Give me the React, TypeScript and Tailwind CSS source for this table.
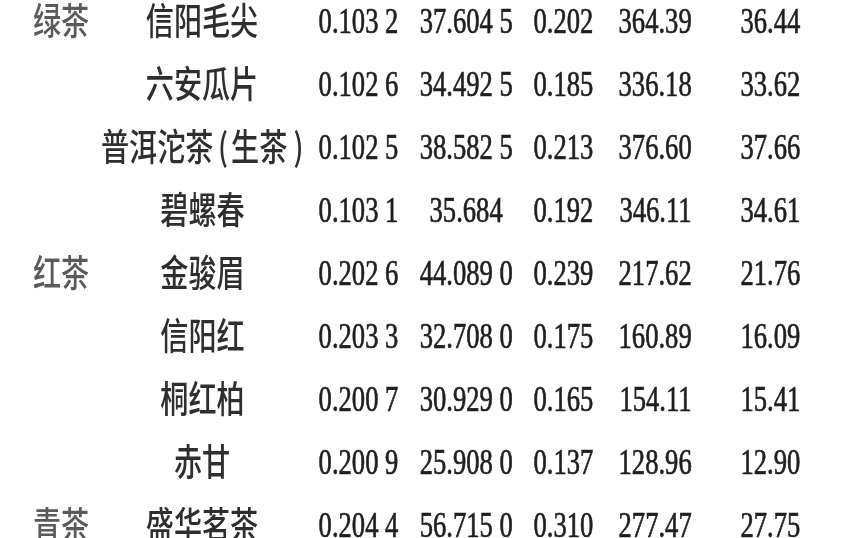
import React from "react";

type Row = { cat?: string; name: string; v: string[] };

const rows: Row[] = [
  { cat: "绿茶", name: "信阳毛尖", v: ["0.103 2", "37.604 5", "0.202", "364.39", "36.44"] },
  { name: "六安瓜片", v: ["0.102 6", "34.492 5", "0.185", "336.18", "33.62"] },
  { name: "普洱沱茶(生茶)", v: ["0.102 5", "38.582 5", "0.213", "376.60", "37.66"] },
  { name: "碧螺春", v: ["0.103 1", "35.684", "0.192", "346.11", "34.61"] },
  { cat: "红茶", name: "金骏眉", v: ["0.202 6", "44.089 0", "0.239", "217.62", "21.76"] },
  { name: "信阳红", v: ["0.203 3", "32.708 0", "0.175", "160.89", "16.09"] },
  { name: "桐红柏", v: ["0.200 7", "30.929 0", "0.165", "154.11", "15.41"] },
  { name: "赤甘", v: ["0.200 9", "25.908 0", "0.137", "128.96", "12.90"] },
  { cat: "青茶", name: "盛华茗茶", v: ["0.204 4", "56.715 0", "0.310", "277.47", "27.75"] },
];

const numWidths = ["w-[152px]", "w-[64px]", "w-[130px]", "w-[54px]", "w-[176px]"];

const cjk = { fontFamily: '"Noto Sans CJK SC", "Noto Sans", sans-serif' };
const serif = { fontFamily: '"Liberation Serif", "Times New Roman", serif' };

function Name({ text }: { text: string }) {
  if (text.includes("(")) {
    const [a, rest] = text.split("(");
    const inner = rest.replace(")", "");
    return (
      <>
        {a}
        <span className="ml-[6px] mr-[4px]">(</span>
        {inner}
        <span className="ml-[8px]">)</span>
      </>
    );
  }
  return <>{text}</>;
}

export default function App() {
  return (
    <div className="w-[861px] h-[538px] overflow-hidden bg-white">
      <div className="mt-[-10px] flex flex-col blur-[0.4px]">
        {rows.map((r, i) => (
          <div key={i} className="flex h-[63px] items-center">
            <div className="w-[122px] flex justify-center">
              {r.cat && (
                <span
                  className="inline-block scale-x-[0.76] whitespace-nowrap text-[37px] font-medium leading-none text-[#5a5a5a] -translate-y-[2px]"
                  style={cjk}
                >
                  {r.cat}
                </span>
              )}
            </div>
            <div className="w-[160px] flex justify-center">
              <span
                className="inline-block scale-x-[0.76] whitespace-nowrap text-[37px] font-medium leading-none text-[#2e2e2e] -translate-y-[2px]"
                style={cjk}
              >
                <Name text={r.name} />
              </span>
            </div>
            {r.v.map((t, j) => (
              <div key={j} className={`${numWidths[j]} flex justify-center`}>
                <span
                  className="inline-block scale-x-[0.76] whitespace-pre text-[35px] leading-none text-[#1f1f1f] [-webkit-text-stroke:0.7px_#1f1f1f]"
                  style={serif}
                >
                  {t}
                </span>
              </div>
            ))}
          </div>
        ))}
      </div>
    </div>
  );
}
